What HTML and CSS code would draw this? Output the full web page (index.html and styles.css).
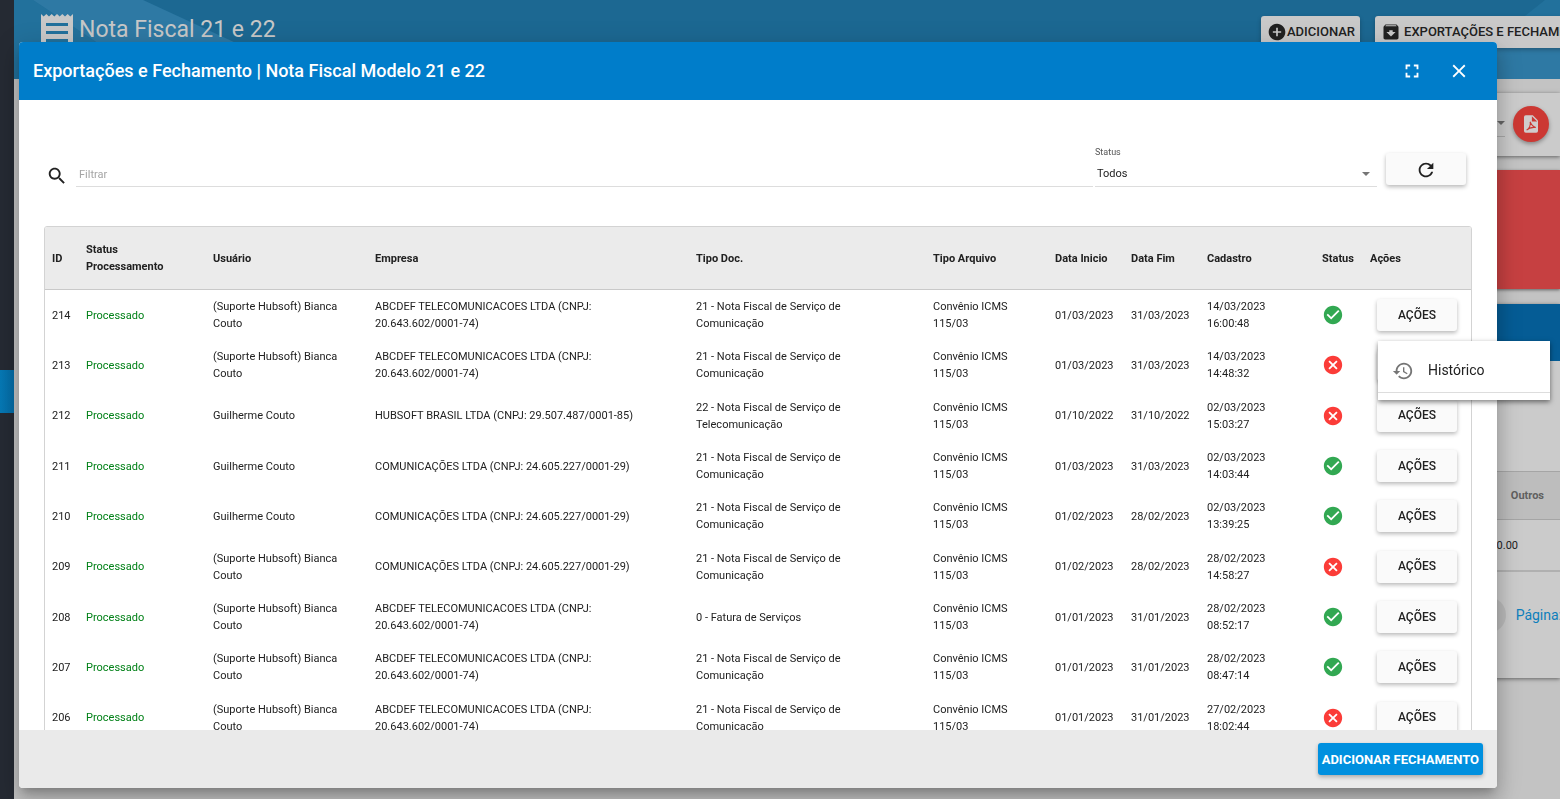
FILE: index.html
```html
<!DOCTYPE html>
<html lang="pt-BR">
<head>
<meta charset="utf-8">
<title>Nota Fiscal 21 e 22</title>
<link rel="stylesheet" href="styles.css">
</head>
<body>
<svg class="sprite" aria-hidden="true">
  <symbol id="ok" viewBox="0 0 24 24"><path d="M12 2C6.500 2 2 6.500 2 12s4.500 10 10 10 10-4.500 10-10S17.500 2 12 2zm-2 15l-5-5 1.400-1.400 3.600 3.600 7.600-7.600L19 8l-9 9z"/></symbol>
  <symbol id="fail" viewBox="0 0 24 24"><path d="M12 2C6.470 2 2 6.470 2 12s4.470 10 10 10 10-4.470 10-10S17.530 2 12 2zm5 13.590L15.590 17 12 13.410 8.410 17 7 15.590 10.590 12 7 8.410 8.410 7 12 10.590 15.590 7 17 8.410 13.410 12 17 15.590z"/></symbol>
  <symbol id="caret" viewBox="0 0 8 4"><path d="M0 0h8L4 4z"/></symbol>
</svg>

<div class="app">
  <aside class="sidebar"><div class="sidebar-active"></div></aside>
  <div class="page">
    <header class="page-header">
      <svg class="art art-left" viewBox="0 0 300 79" aria-hidden="true"><path fill="#22719c" d="M0 0h19l119 79H0z"/><path fill="#2e79a4" d="M19 0h110l171 79H138z"/></svg>
      <svg class="art art-right" viewBox="0 0 160 79" aria-hidden="true"><path fill="#22719c" d="M160 0h-15L120 20 60 79h100z"/><path fill="#2e79a4" d="M160 30v49H20l50-31h60z"/></svg>
      <h1><svg class="receipt" viewBox="0 0 32 36" aria-hidden="true"><path fill="currentColor" fill-rule="evenodd" d="M0 0l2.700 2.500L5.300 0 8 2.500 10.700 0l2.600 2.500L16 0l2.700 2.500L21.300 0 24 2.500 26.700 0l2.600 2.500L32 0v36H0zM5 9v3h22V9zm0 8v3h22v-3zm0 8v3h22v-3z"/></svg>Nota Fiscal 21 e 22</h1>
      <div class="header-actions">
        <button class="tool add"><svg viewBox="0 0 24 24" aria-hidden="true"><path d="M12 2C6.480 2 2 6.480 2 12s4.480 10 10 10 10-4.480 10-10S17.520 2 12 2zm5 11h-4v4h-2v-4H7v-2h4V7h2v4h4v2z"/></svg>ADICIONAR</button>
        <button class="tool export"><svg viewBox="0 0 24 24" aria-hidden="true"><path d="M20.540 5.230l-1.390-1.680C18.880 3.210 18.470 3 18 3H6c-.470 0-.880.210-1.160.550L3.460 5.230C3.170 5.570 3 6.020 3 6.500V19c0 1.100.900 2 2 2h14c1.100 0 2-.900 2-2V6.500c0-.480-.170-.930-.460-1.270zM12 17.500L6.500 12H10v-2h4v2h3.500L12 17.500zM5.120 5l.810-1h12l.940 1H5.120z"/></svg>EXPORTAÇÕES E FECHAMENTO</button>
      </div>
    </header>
    <main class="page-main">
      <section class="card toolbar">
        <span class="bg-select"><svg aria-hidden="true"><use href="#caret"/></svg></span>
        <button class="pdf" aria-label="PDF"><svg viewBox="0 0 16 20" aria-hidden="true"><path fill="#d0cccc" d="M2 0h8l6 6v12a2 2 0 0 1-2 2H2a2 2 0 0 1-2-2V2a2 2 0 0 1 2-2z"/><path fill="#cc3833" d="M9 1v6h6z"/><path fill="none" stroke="#cc3833" stroke-width="1.200" d="M7 7.500c1.500 3.500 3 6 6.500 6.500-4-.500-7.500 0-10.500 3 3-1.500 5-5.500 4-9.500z"/></svg></button>
      </section>
      <section class="alert"></section>
      <section class="card list">
        <div class="list-bar"></div>
        <div class="list-space"></div>
        <div class="list-head">Outros</div>
        <div class="list-row">0.00</div>
        <div class="pager"><button class="pager-btn" aria-label="Anterior"></button><span>Página:</span></div>
      </section>
    </main>
  </div>
</div>

<div class="overlay">
  <section class="dialog" role="dialog" aria-labelledby="dialog-title">
    <header class="dialog-header">
      <h2 id="dialog-title">Exportações e Fechamento | Nota Fiscal Modelo 21 e 22</h2>
      <button class="icon-btn" aria-label="Tela cheia"><svg viewBox="0 0 24 24" aria-hidden="true"><path d="M7 14H5v5h5v-2H7v-3zm-2-4h2V7h3V5H5v5zm12 7h-3v2h5v-5h-2v3zM14 5v2h3v3h2V5h-5z"/></svg></button>
      <button class="icon-btn" aria-label="Fechar"><svg viewBox="0 0 24 24" aria-hidden="true"><path d="M19 6.410L17.590 5 12 10.590 6.410 5 5 6.410 10.590 12 5 17.590 6.410 19 12 13.410 17.590 19 19 17.590 13.410 12z"/></svg></button>
    </header>
    <div class="dialog-body">
      <form class="filters">
        <svg class="search" viewBox="0 0 24 24" aria-hidden="true"><path d="M15.500 14h-.790l-.280-.270C15.410 12.590 16 11.110 16 9.500 16 5.910 13.090 3 9.500 3S3 5.910 3 9.500 5.910 16 9.500 16c1.610 0 3.090-.590 4.230-1.570l.270.280v.790l5 4.990L20.490 19l-4.990-5zm-6 0C7.010 14 5 11.990 5 9.500S7.010 5 9.500 5 14 7.010 14 9.500 11.990 14 9.500 14z"/></svg>
        <input class="filter-input" type="text" placeholder="Filtrar" aria-label="Filtrar">
        <div class="status-field">
          <label for="status">Status</label>
          <div class="select-wrap"><select id="status"><option>Todos</option></select><svg aria-hidden="true"><use href="#caret"/></svg></div>
        </div>
        <button class="raised refresh" type="button" aria-label="Atualizar"><svg viewBox="0 0 24 24" aria-hidden="true"><path d="M17.650 6.350C16.200 4.900 14.210 4 12 4c-4.420 0-7.990 3.580-7.990 8s3.570 8 7.990 8c3.730 0 6.840-2.550 7.730-6h-2.080c-.820 2.330-3.040 4-5.650 4-3.310 0-6-2.690-6-6s2.690-6 6-6c1.660 0 3.140.690 4.220 1.780L13 11h7V4l-2.350 2.350z"/></svg></button>
      </form>
      <div class="table-box">
        <table>
          <colgroup><col class="c-id"><col class="c-proc"><col class="c-user"><col class="c-company"><col class="c-doc"><col class="c-file"><col class="c-date"><col class="c-date"><col class="c-created"><col class="c-status"><col class="c-actions"></colgroup>
          <thead><tr><th>ID</th><th>Status Processamento</th><th>Usuário</th><th>Empresa</th><th>Tipo Doc.</th><th>Tipo Arquivo</th><th class="nw">Data Inicio</th><th class="nw">Data Fim</th><th>Cadastro</th><th class="nw">Status</th><th>Ações</th></tr></thead>
          <tbody>
            <tr><td>214</td><td class="done">Processado</td><td>(Suporte Hubsoft) Bianca Couto</td><td>ABCDEF TELECOMUNICACOES LTDA (CNPJ: 20.643.602/0001-74)</td><td class="doc">21 - Nota Fiscal de Serviço de Comunicação</td><td>Convênio ICMS 115/03</td><td class="nw">01/03/2023</td><td class="nw">31/03/2023</td><td>14/03/2023 16:00:48</td><td><svg class="state ok"><use href="#ok"/></svg></td><td class="act"><button class="raised">AÇÕES</button></td></tr>
            <tr><td>213</td><td class="done">Processado</td><td>(Suporte Hubsoft) Bianca Couto</td><td>ABCDEF TELECOMUNICACOES LTDA (CNPJ: 20.643.602/0001-74)</td><td class="doc">21 - Nota Fiscal de Serviço de Comunicação</td><td>Convênio ICMS 115/03</td><td class="nw">01/03/2023</td><td class="nw">31/03/2023</td><td>14/03/2023 14:48:32</td><td><svg class="state fail"><use href="#fail"/></svg></td><td class="act"><button class="raised">AÇÕES</button></td></tr>
            <tr><td>212</td><td class="done">Processado</td><td>Guilherme Couto</td><td>HUBSOFT BRASIL LTDA (CNPJ: 29.507.487/0001-85)</td><td class="doc">22 - Nota Fiscal de Serviço de Telecomunicação</td><td>Convênio ICMS 115/03</td><td class="nw">01/10/2022</td><td class="nw">31/10/2022</td><td>02/03/2023 15:03:27</td><td><svg class="state fail"><use href="#fail"/></svg></td><td class="act"><button class="raised">AÇÕES</button></td></tr>
            <tr><td>211</td><td class="done">Processado</td><td>Guilherme Couto</td><td>COMUNICAÇÕES LTDA (CNPJ: 24.605.227/0001-29)</td><td class="doc">21 - Nota Fiscal de Serviço de Comunicação</td><td>Convênio ICMS 115/03</td><td class="nw">01/03/2023</td><td class="nw">31/03/2023</td><td>02/03/2023 14:03:44</td><td><svg class="state ok"><use href="#ok"/></svg></td><td class="act"><button class="raised">AÇÕES</button></td></tr>
            <tr><td>210</td><td class="done">Processado</td><td>Guilherme Couto</td><td>COMUNICAÇÕES LTDA (CNPJ: 24.605.227/0001-29)</td><td class="doc">21 - Nota Fiscal de Serviço de Comunicação</td><td>Convênio ICMS 115/03</td><td class="nw">01/02/2023</td><td class="nw">28/02/2023</td><td>02/03/2023 13:39:25</td><td><svg class="state ok"><use href="#ok"/></svg></td><td class="act"><button class="raised">AÇÕES</button></td></tr>
            <tr><td>209</td><td class="done">Processado</td><td>(Suporte Hubsoft) Bianca Couto</td><td>COMUNICAÇÕES LTDA (CNPJ: 24.605.227/0001-29)</td><td class="doc">21 - Nota Fiscal de Serviço de Comunicação</td><td>Convênio ICMS 115/03</td><td class="nw">01/02/2023</td><td class="nw">28/02/2023</td><td>28/02/2023 14:58:27</td><td><svg class="state fail"><use href="#fail"/></svg></td><td class="act"><button class="raised">AÇÕES</button></td></tr>
            <tr><td>208</td><td class="done">Processado</td><td>(Suporte Hubsoft) Bianca Couto</td><td>ABCDEF TELECOMUNICACOES LTDA (CNPJ: 20.643.602/0001-74)</td><td class="doc">0 - Fatura de Serviços</td><td>Convênio ICMS 115/03</td><td class="nw">01/01/2023</td><td class="nw">31/01/2023</td><td>28/02/2023 08:52:17</td><td><svg class="state ok"><use href="#ok"/></svg></td><td class="act"><button class="raised">AÇÕES</button></td></tr>
            <tr><td>207</td><td class="done">Processado</td><td>(Suporte Hubsoft) Bianca Couto</td><td>ABCDEF TELECOMUNICACOES LTDA (CNPJ: 20.643.602/0001-74)</td><td class="doc">21 - Nota Fiscal de Serviço de Comunicação</td><td>Convênio ICMS 115/03</td><td class="nw">01/01/2023</td><td class="nw">31/01/2023</td><td>28/02/2023 08:47:14</td><td><svg class="state ok"><use href="#ok"/></svg></td><td class="act"><button class="raised">AÇÕES</button></td></tr>
            <tr><td>206</td><td class="done">Processado</td><td>(Suporte Hubsoft) Bianca Couto</td><td>ABCDEF TELECOMUNICACOES LTDA (CNPJ: 20.643.602/0001-74)</td><td class="doc">21 - Nota Fiscal de Serviço de Comunicação</td><td>Convênio ICMS 115/03</td><td class="nw">01/01/2023</td><td class="nw">31/01/2023</td><td>27/02/2023 18:02:44</td><td><svg class="state fail"><use href="#fail"/></svg></td><td class="act"><button class="raised">AÇÕES</button></td></tr>
          </tbody>
        </table>
      </div>
    </div>
    <footer class="dialog-footer"><button class="primary">ADICIONAR FECHAMENTO</button></footer>
  </section>
</div>

<div class="menu" role="menu">
  <button class="menu-item" role="menuitem"><svg viewBox="0 0 24 24" aria-hidden="true"><path d="M13 3c-4.970 0-9 4.030-9 9H1l3.890 3.890.070.140L9 12H6c0-3.870 3.130-7 7-7s7 3.130 7 7-3.130 7-7 7c-1.930 0-3.680-.790-4.940-2.060l-1.420 1.420C8.270 19.990 10.510 21 13 21c4.970 0 9-4.030 9-9s-4.030-9-9-9z" class="ring"/><path d="M12 8v5l4.280 2.540.720-1.210-3.500-2.080V8z"/></svg>Histórico</button>
</div>
</body>
</html>
```
FILE: styles.css
```css
* { box-sizing: border-box; }
body { margin: 0; height: 100vh; overflow: hidden; background: #c3c3c3; color: #212121; font: 11px/17px Roboto, "Liberation Sans", sans-serif; }
button, input, select { font: inherit; color: inherit; }
button { border: 0; padding: 0; cursor: pointer; }
h1, h2 { margin: 0; font-weight: 400; }
svg { fill: currentColor; flex: none; }
.sprite { position: absolute; width: 0; height: 0; }

/* Page behind the dialog */
.app { display: flex; height: 100%; }
.sidebar { flex: none; width: 14px; padding-top: 370px; background: #252a33; }
.sidebar-active { height: 43px; background: linear-gradient(90deg, #0678b4, #046ca6); }
.page { flex: 1; min-width: 0; }
.page-header { position: relative; display: flex; justify-content: space-between; height: 79px; padding: 14px 0 0 27px; overflow: hidden; background: #1c6892; }
.art { position: absolute; top: 0; height: 79px; }
.art-left { left: 0; width: 300px; }
.art-right { right: 0; width: 160px; }
h1 { position: relative; display: flex; align-items: flex-start; gap: 6px; color: #c8c8c8; font-size: 23px; line-height: 32px; }
.receipt { width: 32px; height: 36px; }
.header-actions { position: relative; display: flex; gap: 15px; width: 299px; padding-top: 2px; }
.tool { display: flex; flex: none; align-items: center; height: 32px; padding: 0 5px 0 6px; border-radius: 3px; background: #c9c9c9; color: #212121; font-size: 13px; font-weight: 500; line-height: 16px; box-shadow: 0 2px 4px rgba(0,0,0,.25); white-space: nowrap; }
.tool svg { width: 20px; height: 20px; }
.export { gap: 3px; }
.page-main { padding: 14px 0 0 25px; background: #c3c3c3; }
.card { background: #cbcbcb; box-shadow: 0 1px 4px rgba(0,0,0,.5); }
.toolbar { display: flex; justify-content: flex-end; align-items: center; gap: 8px; height: 63px; padding: 0 11px 2px 0; }
.bg-select { display: flex; justify-content: flex-end; width: 80px; height: 26px; padding: 10px 0 0; border-bottom: 1px solid #a8a8a8; color: #666; }
.bg-select svg { width: 8px; height: 4px; }
.pdf { display: grid; place-items: center; width: 36px; height: 36px; border-radius: 50%; background: #cc3833; box-shadow: 0 2px 4px rgba(0,0,0,.35); }
.pdf svg { width: 14px; height: 18px; }
.alert { height: 119px; margin-top: 14px; background: #c64041; box-shadow: 0 1px 3px rgba(0,0,0,.5); }
.list { margin-top: 15px; }
.list-bar { height: 57px; background: #055c95; }
.list-space { height: 110px; }
.list-head { display: flex; justify-content: flex-end; align-items: center; height: 49px; padding-right: 16px; border: solid #a5a5a5; border-width: 1px 0; background: #bdbdbd; color: #606060; font-weight: 700; }
.list-row { display: flex; justify-content: flex-end; align-items: center; height: 52px; padding-right: 42px; border-bottom: 2px solid #b0b0b0; }
.pager { display: flex; justify-content: flex-end; align-items: center; gap: 10px; height: 106px; padding-bottom: 20px; margin-right: -2px; color: #0d7fbc; font-size: 14px; }
.pager-btn { width: 36px; height: 36px; border-radius: 50%; background: #bbb; }

/* Dialog */
.overlay { position: fixed; inset: 0; display: flex; padding: 42px 63px 11px 19px; }
.dialog { display: flex; flex-direction: column; flex: 1; min-width: 0; border-radius: 4px; background: #fff; box-shadow: 0 7px 8px -4px rgba(0,0,0,.2), 0 13px 19px 2px rgba(0,0,0,.14), 0 5px 24px 4px rgba(0,0,0,.12); overflow: hidden; }
.dialog-header { display: flex; align-items: center; gap: 23px; flex: none; height: 58px; padding: 0 26px 0 14px; background: #007dca; color: #fff; }
h2 { flex: 1; font-size: 18px; font-weight: 500; line-height: 24px; }
.icon-btn { display: grid; place-items: center; width: 24px; height: 24px; background: none; }
.icon-btn svg { width: 22px; height: 22px; }
.dialog-body { flex: 1; min-height: 0; padding: 45px 25px 0; overflow-y: auto; scrollbar-width: none; }
.filters { display: flex; align-items: flex-end; height: 42px; }
.search { width: 22px; height: 22px; margin: 0 8px 0 2px; }
.filter-input { flex: 1; min-width: 0; height: 25px; padding: 0 3px; border: 0; border-bottom: 1px solid #ddd; background: none; outline: 0; }
.filter-input::placeholder { color: #a5a5a5; opacity: 1; }
.status-field { width: 282px; margin-left: 2px; }
.status-field label { display: block; height: 16px; color: #555; font-size: 9px; line-height: 14px; }
.select-wrap { position: relative; color: #757575; }
select { display: block; width: 100%; height: 26px; padding: 0 2px; border: 0; border-bottom: 1px solid #ddd; background: none; color: #212121; appearance: none; outline: 0; }
.select-wrap svg { position: absolute; right: 7px; top: 11px; width: 8px; height: 4px; pointer-events: none; }
.raised { display: grid; place-items: center; width: 80px; height: 32px; border-radius: 3px; background: #fafafa; font-size: 12px; font-weight: 500; box-shadow: 0 2px 4px rgba(0,0,0,.28); }
.refresh { align-self: flex-start; margin: 8px 6px 0 9px; padding-top: 2px; }
.refresh svg { width: 22px; height: 22px; }

.table-box { margin-top: 39px; border: 1px solid #d3d3d3; border-radius: 3px 3px 0 0; overflow: hidden; }
table { width: 100%; height: 516px; table-layout: fixed; border-collapse: separate; border-spacing: 0; }
.c-id { width: 34px; }
.c-proc { width: 127px; }
.c-user { width: 162px; }
.c-company { width: 321px; }
.c-doc { width: 237px; }
.c-file { width: 122px; }
.c-date { width: 76px; }
.c-created { width: 115px; }
.c-status { width: 48px; }
.c-actions { width: 108px; }
th, td { padding: 0 14px 0 7px; text-align: left; vertical-align: middle; }
th { height: 63px; border-bottom: 1px solid #c9c9c9; background: #ebebeb; font-weight: 700; }
td { height: 50px; }
td:first-child, .nw { padding-right: 0; white-space: nowrap; }
.doc { padding-right: 28px; }
.done { color: #008017; }
.state { display: block; width: 22px; height: 22px; }
.ok { color: #32a852; }
.fail { color: #fb3c38; }
.act { padding-left: 14px; }
.dialog-footer { display: flex; align-items: center; justify-content: flex-end; flex: none; height: 58px; padding: 0 14px; background: #eaeaea; }
.primary { height: 32px; padding: 0 4px; border-radius: 3px; background: #0090df; color: #fff; font-size: 13px; font-weight: 700; box-shadow: 0 2px 4px rgba(0,0,0,.28); }

/* Row actions menu */
.menu { position: fixed; top: 341px; right: 10px; width: 172px; padding: 8px 0 7px; background: #fff; box-shadow: 0 2px 5px rgba(0,0,0,.5); }
.menu-item { display: flex; align-items: center; gap: 14px; width: 100%; height: 44px; padding: 0 14px; border-bottom: 1px solid #ddd; background: none; font-size: 14px; }
.menu-item svg { width: 22px; height: 22px; color: #757575; }
```
